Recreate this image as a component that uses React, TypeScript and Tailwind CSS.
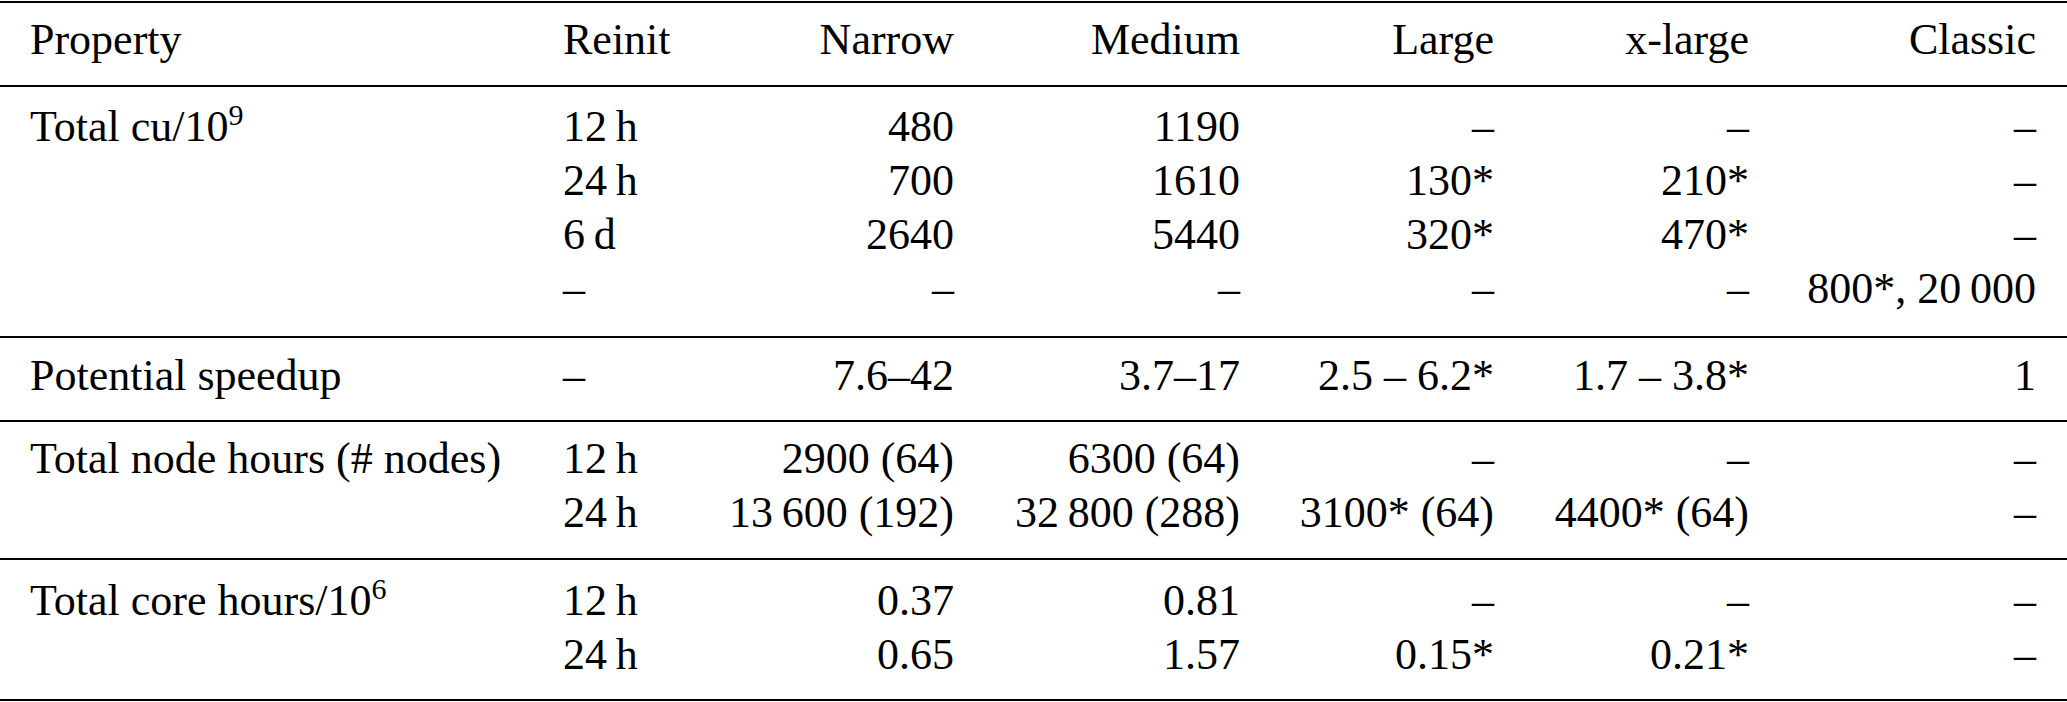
import React from "react";

const T = "\u2009";

const Sup = ({ children }: { children: React.ReactNode }) => (
  <span className="relative -top-[16px] align-baseline text-[30px] leading-none">{children}</span>
);

const gridCls =
  "grid grid-cols-[563px_137px_254px_286px_254px_255px_318px] h-[54px] items-start";

function RowView({ cells }: { cells: React.ReactNode[] }) {
  return (
    <div className={gridCls}>
      {cells.map((c, i) => (
        <div
          key={i}
          className={
            i === 0
              ? "pl-[30px] whitespace-nowrap"
              : i === 1
              ? "whitespace-nowrap"
              : i === 6
              ? "pr-[31px] text-right whitespace-nowrap"
              : "text-right whitespace-nowrap"
          }
        >
          {c}
        </div>
      ))}
    </div>
  );
}

function Group({ rows, cls }: { rows: React.ReactNode[][]; cls: string }) {
  return (
    <div className={`border-b-2 border-black ${cls}`}>
      {rows.map((r, i) => (
        <RowView key={i} cells={r} />
      ))}
    </div>
  );
}

export default function App() {
  const g1: React.ReactNode[][] = [
    [
      <>
        Total cu/10<Sup>9</Sup>
      </>,
      `12${T}h`,
      "480",
      "1190",
      "–",
      "–",
      "–",
    ],
    [null, `24${T}h`, "700", "1610", "130*", "210*", "–"],
    [null, `6${T}d`, "2640", "5440", "320*", "470*", "–"],
    [null, "–", "–", "–", "–", "–", `800*, 20${T}000`],
  ];
  const g2: React.ReactNode[][] = [
    ["Potential speedup", "–", "7.6–42", "3.7–17", "2.5 – 6.2*", "1.7 – 3.8*", "1"],
  ];
  const g3: React.ReactNode[][] = [
    ["Total node hours (# nodes)", `12${T}h`, "2900 (64)", "6300 (64)", "–", "–", "–"],
    [null, `24${T}h`, `13${T}600 (192)`, `32${T}800 (288)`, "3100* (64)", "4400* (64)", "–"],
  ];
  const g4: React.ReactNode[][] = [
    [
      <>
        Total core hours/10<Sup>6</Sup>
      </>,
      `12${T}h`,
      "0.37",
      "0.81",
      "–",
      "–",
      "–",
    ],
    [null, `24${T}h`, "0.65", "1.57", "0.15*", "0.21*", "–"],
  ];

  return (
    <div className="w-[2067px] h-[702px] bg-white pt-px font-['Liberation_Serif'] text-[44px] leading-[54px] text-black">
      <div className="border-t-2 border-black">
        <Group
          cls="pt-[10px] pb-[18px]"
          rows={[["Property", "Reinit", "Narrow", "Medium", "Large", "x-large", "Classic"]]}
        />
        <Group cls="pt-[13px] pb-[20px]" rows={g1} />
        <Group cls="pt-[11px] pb-[17px]" rows={g2} />
        <Group cls="pt-[10px] pb-[18px]" rows={g3} />
        <Group cls="pt-[14px] pb-[17px]" rows={g4} />
      </div>
    </div>
  );
}
